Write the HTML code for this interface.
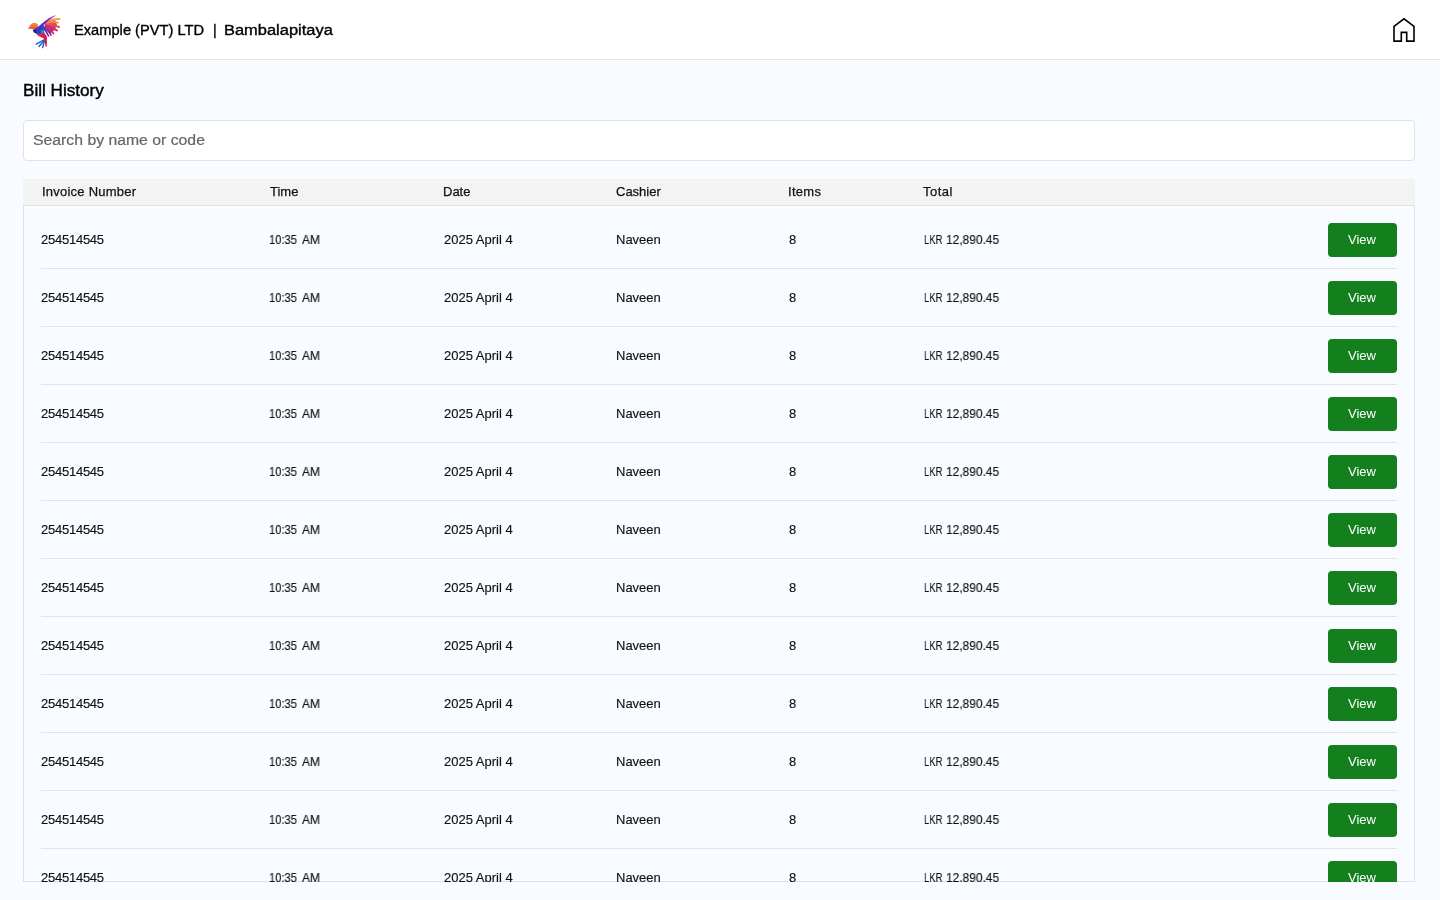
<!DOCTYPE html>
<html>
<head>
<meta charset="utf-8">
<style>
html,body{margin:0;padding:0;}
body{width:1440px;height:900px;overflow:hidden;background:#f8fbff;font-family:"Liberation Sans",sans-serif;color:#111;position:relative;}
.t{position:absolute;white-space:nowrap;line-height:1;will-change:transform;}
#hdr{position:absolute;left:0;top:0;width:1440px;height:59px;background:#fff;border-bottom:1px solid #e4e4e4;}
#logo{position:absolute;left:26px;top:13px;width:36px;height:36px;}
#home{position:absolute;left:1390px;top:16px;width:28px;height:28px;}
#search{position:absolute;left:23px;top:120px;width:1390px;height:39px;border:1px solid #e2e2e2;border-radius:4px;background:#fff;}
#thead{position:absolute;left:23px;top:179px;width:1392px;height:26px;background:#f3f3f3;}
#hline{position:absolute;left:23px;top:205px;width:1392px;height:1px;background:#dfe1e6;}
#body{position:absolute;left:23px;top:206px;width:1392px;height:676px;overflow:hidden;}
#frame{position:absolute;left:0;top:0;width:1390px;height:675px;border:1px solid #dfe1e6;border-top:none;}
.row{position:absolute;left:0;width:1392px;height:58px;}
.div{position:absolute;left:18px;width:1356px;height:1px;background:#e2e4e8;}
.btn{position:absolute;left:1305px;width:69px;height:34px;background:#14801d;border-radius:4px;color:#fff;font-size:13px;}
.btn span{will-change:transform;position:absolute;left:20px;top:10px;line-height:1;}
.c{position:absolute;font-size:13px;line-height:1;white-space:nowrap;color:#111;will-change:transform;-webkit-text-stroke:0.15px #111;}
</style>
</head>
<body>
<div id="hdr">
  <svg id="logo" viewBox="0 0 36 36">
    <defs>
      <linearGradient id="gw" x1="0" y1="1" x2="1" y2="0"><stop offset="0" stop-color="#2d3cc0"/><stop offset="0.5" stop-color="#5a28d0"/><stop offset="1" stop-color="#b020f0"/></linearGradient>
      <linearGradient id="go" x1="0" y1="0" x2="0" y2="1"><stop offset="0" stop-color="#f39a3c"/><stop offset="1" stop-color="#e8483a"/></linearGradient>
      <linearGradient id="gf" x1="0" y1="0" x2="0" y2="1"><stop offset="0" stop-color="#f08a3c"/><stop offset="0.35" stop-color="#e03a6a"/><stop offset="0.7" stop-color="#d02a60"/><stop offset="1" stop-color="#7a2aa0"/></linearGradient>
    </defs>
    <path d="M19,9.5 L29,6.5 L31,12 L28.5,17 L24,20.5 L19.5,16.5 Z" fill="url(#gf)"/>
    <g fill="none" stroke-linecap="round">
      <path d="M20,8.5 Q27,5.5 33.5,6" stroke="#f5a23a" stroke-width="1.9"/>
      <path d="M20,10 Q27,8.5 32,9.6" stroke="#f08a40" stroke-width="1.9"/>
      <path d="M19.5,11.5 Q27,11.5 33.2,14" stroke="#e04a7e" stroke-width="2"/>
      <path d="M19.5,12.5 Q26,14 31,17.5" stroke="#dc2a5c" stroke-width="2"/>
      <path d="M19.5,13.5 Q24,16 27.5,20.5" stroke="#c42a80" stroke-width="1.9"/>
      <path d="M19,14.5 Q22.5,18 25,22" stroke="#8c2a9c" stroke-width="1.7"/>
      <path d="M18,15 Q20.5,19 22.5,23" stroke="#6a28a8" stroke-width="1.6"/>
    </g>
    <path d="M1.8,15.6 L3.5,13.4 C4.5,11 6.5,9.8 8.5,9.8 C10.5,9.8 11.8,11 12.4,12.6 L9.6,16.8 C7,16.3 4.5,15.8 1.8,15.6 Z" fill="url(#go)"/>
    <path d="M6.5,17 L12,14.2 L17.5,12 L19,16 L17,22 L10,20.5 Z" fill="#2a44bc"/>
    <path d="M6.8,17.3 L9.8,16.8 L11,20.6 L8.4,19.8 Z" fill="#0e1a78"/>
    <path d="M14.5,18 L17.8,16 L17.8,22.5 L15.5,21.5 Z" fill="#1d8ad6"/>
    <path d="M8.6,16.6 C13.5,12.5 17.5,9 21.5,6.2 C24.5,4.2 27,2.8 30.2,2.2 C27.5,3.6 25,5.5 22.5,7.8 C18.5,11 14.5,15 10.2,18.6 Z" fill="url(#gw)"/>
    <path d="M9.5,20.3 L15,21.5 L18.2,19.2 L21,24 L20.8,33.5 L19.6,33.6 L18,25.5 L12.5,23 Z" fill="#e0184a"/>
    <g fill="none" stroke-linecap="round" stroke="#1e5ec4">
      <path d="M18,26.8 L10.3,31.2" stroke-width="1.4"/>
      <path d="M18.2,27.5 L13,33.5" stroke-width="1.4"/>
      <path d="M18.5,27.8 L16.6,34.6" stroke-width="1.4"/>
    </g>
  </svg>
  <span class="t" style="left:74px;top:23px;font-size:14px;transform:scaleX(1.047);transform-origin:0 0;color:#000;-webkit-text-stroke:0.35px #000;">Example (PVT) LTD</span>
  <span class="t" style="left:213px;top:23px;font-size:14px;color:#000;-webkit-text-stroke:0.35px #000;">|</span>
  <span class="t" style="left:224px;top:23px;font-size:14px;transform:scaleX(1.175);transform-origin:0 0;color:#000;-webkit-text-stroke:0.35px #000;">Bambalapitaya</span>
  <svg id="home" viewBox="0 0 28 28">
    <path d="M4,10.4 L14,2.8 L24,10.4 L24,25.1 L16.7,25.1 L16.7,16.4 L11.3,16.4 L11.3,25.1 L4,25.1 Z" fill="none" stroke="#000" stroke-width="1.6" stroke-linejoin="miter"/>
  </svg>
</div>

<span class="t" style="left:23px;top:83px;font-size:16px;transform:scaleX(1.07);transform-origin:0 0;color:#000;-webkit-text-stroke:0.4px #000;">Bill History</span>

<div id="search"></div>
<span class="t" style="left:33px;top:133px;font-size:14px;color:#666;transform:scaleX(1.127);transform-origin:0 0;-webkit-text-stroke:0.2px #666;">Search by name or code</span>

<div id="thead"></div>
<div id="hline"></div>
<span class="t" style="left:42px;top:185px;font-size:13px;color:#111;-webkit-text-stroke:0.25px #111;letter-spacing:0.23px;">Invoice Number</span>
<span class="t" style="left:270px;top:185px;font-size:13px;color:#111;-webkit-text-stroke:0.25px #111;">Time</span>
<span class="t" style="left:443px;top:185px;font-size:13px;color:#111;-webkit-text-stroke:0.25px #111;">Date</span>
<span class="t" style="left:616px;top:185px;font-size:13px;color:#111;-webkit-text-stroke:0.25px #111;">Cashier</span>
<span class="t" style="left:788px;top:185px;font-size:13px;letter-spacing:0.3px;color:#111;-webkit-text-stroke:0.25px #111;">Items</span>
<span class="t" style="left:923px;top:185px;font-size:13px;color:#111;-webkit-text-stroke:0.25px #111;letter-spacing:0.5px;">Total</span>

<div id="body">
  <div id="frame"></div>
  <span class="c" style="left:18px;top:27px;letter-spacing:-0.25px">254514545</span><span class="c" style="left:246px;top:27px;transform:scaleX(0.858);transform-origin:0 0">10:35</span><span class="c" style="left:278.5px;top:27px;transform:scaleX(0.92);transform-origin:0 0">AM</span><span class="c" style="left:421px;top:27px">2025 April 4</span><span class="c" style="left:593px;top:27px">Naveen</span><span class="c" style="left:765.5px;top:27px">8</span><span class="c" style="left:901px;top:27px;transform:scaleX(0.727);transform-origin:0 0">LKR</span><span class="c" style="left:923px;top:27px;transform:scaleX(0.92);transform-origin:0 0">12,890.45</span><div class="btn" style="top:17px"><span>View</span></div>
  <div class="div" style="top:62px"></div>
  <span class="c" style="left:18px;top:85px;letter-spacing:-0.25px">254514545</span><span class="c" style="left:246px;top:85px;transform:scaleX(0.858);transform-origin:0 0">10:35</span><span class="c" style="left:278.5px;top:85px;transform:scaleX(0.92);transform-origin:0 0">AM</span><span class="c" style="left:421px;top:85px">2025 April 4</span><span class="c" style="left:593px;top:85px">Naveen</span><span class="c" style="left:765.5px;top:85px">8</span><span class="c" style="left:901px;top:85px;transform:scaleX(0.727);transform-origin:0 0">LKR</span><span class="c" style="left:923px;top:85px;transform:scaleX(0.92);transform-origin:0 0">12,890.45</span><div class="btn" style="top:75px"><span>View</span></div>
  <div class="div" style="top:120px"></div>
  <span class="c" style="left:18px;top:143px;letter-spacing:-0.25px">254514545</span><span class="c" style="left:246px;top:143px;transform:scaleX(0.858);transform-origin:0 0">10:35</span><span class="c" style="left:278.5px;top:143px;transform:scaleX(0.92);transform-origin:0 0">AM</span><span class="c" style="left:421px;top:143px">2025 April 4</span><span class="c" style="left:593px;top:143px">Naveen</span><span class="c" style="left:765.5px;top:143px">8</span><span class="c" style="left:901px;top:143px;transform:scaleX(0.727);transform-origin:0 0">LKR</span><span class="c" style="left:923px;top:143px;transform:scaleX(0.92);transform-origin:0 0">12,890.45</span><div class="btn" style="top:133px"><span>View</span></div>
  <div class="div" style="top:178px"></div>
  <span class="c" style="left:18px;top:201px;letter-spacing:-0.25px">254514545</span><span class="c" style="left:246px;top:201px;transform:scaleX(0.858);transform-origin:0 0">10:35</span><span class="c" style="left:278.5px;top:201px;transform:scaleX(0.92);transform-origin:0 0">AM</span><span class="c" style="left:421px;top:201px">2025 April 4</span><span class="c" style="left:593px;top:201px">Naveen</span><span class="c" style="left:765.5px;top:201px">8</span><span class="c" style="left:901px;top:201px;transform:scaleX(0.727);transform-origin:0 0">LKR</span><span class="c" style="left:923px;top:201px;transform:scaleX(0.92);transform-origin:0 0">12,890.45</span><div class="btn" style="top:191px"><span>View</span></div>
  <div class="div" style="top:236px"></div>
  <span class="c" style="left:18px;top:259px;letter-spacing:-0.25px">254514545</span><span class="c" style="left:246px;top:259px;transform:scaleX(0.858);transform-origin:0 0">10:35</span><span class="c" style="left:278.5px;top:259px;transform:scaleX(0.92);transform-origin:0 0">AM</span><span class="c" style="left:421px;top:259px">2025 April 4</span><span class="c" style="left:593px;top:259px">Naveen</span><span class="c" style="left:765.5px;top:259px">8</span><span class="c" style="left:901px;top:259px;transform:scaleX(0.727);transform-origin:0 0">LKR</span><span class="c" style="left:923px;top:259px;transform:scaleX(0.92);transform-origin:0 0">12,890.45</span><div class="btn" style="top:249px"><span>View</span></div>
  <div class="div" style="top:294px"></div>
  <span class="c" style="left:18px;top:317px;letter-spacing:-0.25px">254514545</span><span class="c" style="left:246px;top:317px;transform:scaleX(0.858);transform-origin:0 0">10:35</span><span class="c" style="left:278.5px;top:317px;transform:scaleX(0.92);transform-origin:0 0">AM</span><span class="c" style="left:421px;top:317px">2025 April 4</span><span class="c" style="left:593px;top:317px">Naveen</span><span class="c" style="left:765.5px;top:317px">8</span><span class="c" style="left:901px;top:317px;transform:scaleX(0.727);transform-origin:0 0">LKR</span><span class="c" style="left:923px;top:317px;transform:scaleX(0.92);transform-origin:0 0">12,890.45</span><div class="btn" style="top:307px"><span>View</span></div>
  <div class="div" style="top:352px"></div>
  <span class="c" style="left:18px;top:375px;letter-spacing:-0.25px">254514545</span><span class="c" style="left:246px;top:375px;transform:scaleX(0.858);transform-origin:0 0">10:35</span><span class="c" style="left:278.5px;top:375px;transform:scaleX(0.92);transform-origin:0 0">AM</span><span class="c" style="left:421px;top:375px">2025 April 4</span><span class="c" style="left:593px;top:375px">Naveen</span><span class="c" style="left:765.5px;top:375px">8</span><span class="c" style="left:901px;top:375px;transform:scaleX(0.727);transform-origin:0 0">LKR</span><span class="c" style="left:923px;top:375px;transform:scaleX(0.92);transform-origin:0 0">12,890.45</span><div class="btn" style="top:365px"><span>View</span></div>
  <div class="div" style="top:410px"></div>
  <span class="c" style="left:18px;top:433px;letter-spacing:-0.25px">254514545</span><span class="c" style="left:246px;top:433px;transform:scaleX(0.858);transform-origin:0 0">10:35</span><span class="c" style="left:278.5px;top:433px;transform:scaleX(0.92);transform-origin:0 0">AM</span><span class="c" style="left:421px;top:433px">2025 April 4</span><span class="c" style="left:593px;top:433px">Naveen</span><span class="c" style="left:765.5px;top:433px">8</span><span class="c" style="left:901px;top:433px;transform:scaleX(0.727);transform-origin:0 0">LKR</span><span class="c" style="left:923px;top:433px;transform:scaleX(0.92);transform-origin:0 0">12,890.45</span><div class="btn" style="top:423px"><span>View</span></div>
  <div class="div" style="top:468px"></div>
  <span class="c" style="left:18px;top:491px;letter-spacing:-0.25px">254514545</span><span class="c" style="left:246px;top:491px;transform:scaleX(0.858);transform-origin:0 0">10:35</span><span class="c" style="left:278.5px;top:491px;transform:scaleX(0.92);transform-origin:0 0">AM</span><span class="c" style="left:421px;top:491px">2025 April 4</span><span class="c" style="left:593px;top:491px">Naveen</span><span class="c" style="left:765.5px;top:491px">8</span><span class="c" style="left:901px;top:491px;transform:scaleX(0.727);transform-origin:0 0">LKR</span><span class="c" style="left:923px;top:491px;transform:scaleX(0.92);transform-origin:0 0">12,890.45</span><div class="btn" style="top:481px"><span>View</span></div>
  <div class="div" style="top:526px"></div>
  <span class="c" style="left:18px;top:549px;letter-spacing:-0.25px">254514545</span><span class="c" style="left:246px;top:549px;transform:scaleX(0.858);transform-origin:0 0">10:35</span><span class="c" style="left:278.5px;top:549px;transform:scaleX(0.92);transform-origin:0 0">AM</span><span class="c" style="left:421px;top:549px">2025 April 4</span><span class="c" style="left:593px;top:549px">Naveen</span><span class="c" style="left:765.5px;top:549px">8</span><span class="c" style="left:901px;top:549px;transform:scaleX(0.727);transform-origin:0 0">LKR</span><span class="c" style="left:923px;top:549px;transform:scaleX(0.92);transform-origin:0 0">12,890.45</span><div class="btn" style="top:539px"><span>View</span></div>
  <div class="div" style="top:584px"></div>
  <span class="c" style="left:18px;top:607px;letter-spacing:-0.25px">254514545</span><span class="c" style="left:246px;top:607px;transform:scaleX(0.858);transform-origin:0 0">10:35</span><span class="c" style="left:278.5px;top:607px;transform:scaleX(0.92);transform-origin:0 0">AM</span><span class="c" style="left:421px;top:607px">2025 April 4</span><span class="c" style="left:593px;top:607px">Naveen</span><span class="c" style="left:765.5px;top:607px">8</span><span class="c" style="left:901px;top:607px;transform:scaleX(0.727);transform-origin:0 0">LKR</span><span class="c" style="left:923px;top:607px;transform:scaleX(0.92);transform-origin:0 0">12,890.45</span><div class="btn" style="top:597px"><span>View</span></div>
  <div class="div" style="top:642px"></div>
  <span class="c" style="left:18px;top:665px;letter-spacing:-0.25px">254514545</span><span class="c" style="left:246px;top:665px;transform:scaleX(0.858);transform-origin:0 0">10:35</span><span class="c" style="left:278.5px;top:665px;transform:scaleX(0.92);transform-origin:0 0">AM</span><span class="c" style="left:421px;top:665px">2025 April 4</span><span class="c" style="left:593px;top:665px">Naveen</span><span class="c" style="left:765.5px;top:665px">8</span><span class="c" style="left:901px;top:665px;transform:scaleX(0.727);transform-origin:0 0">LKR</span><span class="c" style="left:923px;top:665px;transform:scaleX(0.92);transform-origin:0 0">12,890.45</span><div class="btn" style="top:655px"><span>View</span></div>
</div>
</body>
</html>
